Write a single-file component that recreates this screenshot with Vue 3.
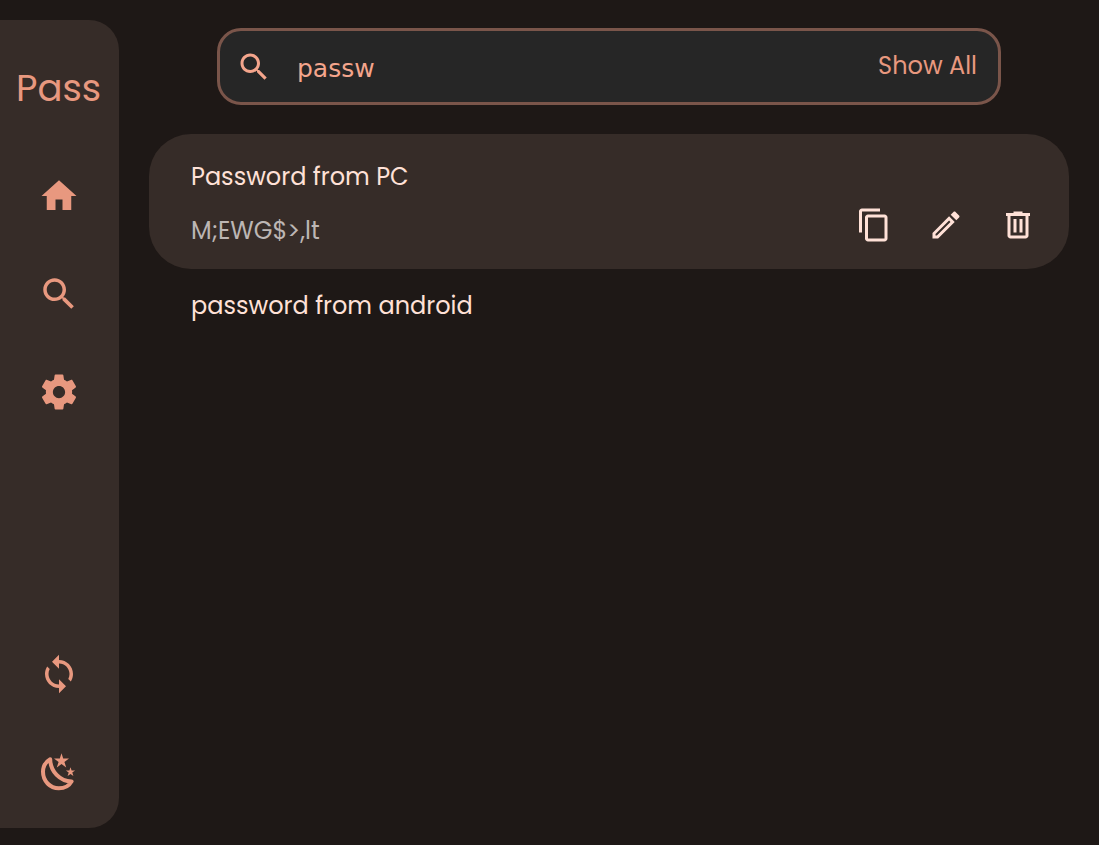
<script setup>
import { ref, computed } from 'vue'

const query = ref('passw')
const showAll = ref(false)
const selected = ref(0)
const entries = [
  { name: 'Password from PC', value: 'M;EWG$>,lt' },
  { name: 'password from android', value: '' },
]
const visible = computed(() =>
  showAll.value ? entries : entries.filter((e) => e.name.toLowerCase().includes(query.value.toLowerCase()))
)

const searchPath =
  'M15.5 14h-.79l-.28-.27C15.41 12.59 16 11.11 16 9.5 16 5.91 13.09 3 9.5 3S3 5.91 3 9.5 5.91 16 9.5 16c1.61 0 3.09-.59 4.23-1.57l.27.28v.79l5 4.99L20.49 19l-4.99-5zm-6 0C7.01 14 5 11.99 5 9.5S7.01 5 9.5 5 14 7.01 14 9.5 11.99 14 9.5 14z'
const mainNav = [
  { label: 'Home', path: 'M10 20v-6h4v6h5v-8h3L12 3 2 12h3v8z' },
  { label: 'Search', path: searchPath },
  {
    label: 'Settings',
    path: 'M19.43 12.98c.04-.32.07-.64.07-.98s-.03-.66-.07-.98l2.11-1.65c.19-.15.24-.42.12-.64l-2-3.46c-.12-.22-.39-.3-.61-.22l-2.49 1c-.52-.4-1.08-.73-1.69-.98l-.38-2.65C14.46 2.18 14.25 2 14 2h-4c-.25 0-.46.18-.49.42l-.38 2.65c-.61.25-1.17.59-1.69.98l-2.49-1c-.23-.09-.49 0-.61.22l-2 3.46c-.13.22-.07.49.12.64l2.11 1.65c-.04.32-.07.65-.07.98s.03.66.07.98l-2.11 1.65c-.19.15-.24.42-.12.64l2 3.46c.12.22.39.3.61.22l2.49-1c.52.4 1.08.73 1.69.98l.38 2.65c.03.24.24.42.49.42h4c.25 0 .46-.18.49-.42l.38-2.65c.61-.25 1.17-.59 1.69-.98l2.49 1c.23.09.49 0 .61-.22l2-3.46c.12-.22.07-.49-.12-.64l-2.11-1.65zM12 15.5c-1.93 0-3.5-1.57-3.5-3.5s1.57-3.5 3.5-3.5 3.5 1.570 3.500 3.500-1.570 3.500-3.500 3.500z',
  },
]
const actions = [
  {
    label: 'Copy',
    path: 'M16 1H4c-1.1 0-2 .9-2 2v14h2V3h12V1zm3 4H8c-1.1 0-2 .9-2 2v14c0 1.1.9 2 2 2h11c1.1 0 2-.9 2-2V7c0-1.1-.9-2-2-2zm0 16H8V7h11v14z',
  },
  {
    label: 'Edit',
    path: 'M14.06 9.02l.92.92L5.92 19H5v-.92l9.06-9.06M17.66 3c-.25 0-.51.1-.7.29l-1.83 1.83 3.75 3.75 1.83-1.83c.39-.39.39-1.02 0-1.41l-2.34-2.34c-.2-.2-.45-.29-.71-.29zm-3.6 3.19L3 17.25V21h3.75L17.81 9.94l-3.75-3.75z',
  },
  {
    label: 'Delete',
    path: 'M7 21q-.825 0-1.412-.587T5 19V6H4V4h5V3h6v1h5v2h-1v13q0 .825-.587 1.413T17 21zM17 6H7v13h10zM9 17h2V8H9zm4 0h2V8h-2z',
  },
]
</script>

<template>
  <div class="app">
    <aside class="sidebar">
      <h1 class="brand">Pass</h1>
      <nav class="nav" aria-label="Main">
        <button v-for="item in mainNav" :key="item.label" class="nav-btn" type="button" :aria-label="item.label">
          <svg class="nav-icon" viewBox="0 0 24 24"><path :d="item.path" /></svg>
        </button>
      </nav>
      <div class="nav">
        <button class="nav-btn" type="button" aria-label="Sync">
          <svg class="nav-icon" viewBox="0 0 24 24">
            <path
              d="M12 4V1L8 5l4 4V6c3.31 0 6 2.69 6 6 0 1.01-.25 1.97-.7 2.8l1.46 1.46C19.54 15.03 20 13.57 20 12c0-4.42-3.58-8-8-8zm0 14c-3.31 0-6-2.69-6-6 0-1.01.25-1.97.7-2.8L5.24 7.74C4.46 8.97 4 10.43 4 12c0 4.42 3.58 8 8 8v3l4-4-4-4v3z"
            />
          </svg>
        </button>
        <button class="nav-btn" type="button" aria-label="Dark theme">
          <svg class="nav-icon" viewBox="0 0 42 42">
            <path
              class="moon"
              d="M12.200 8.200C7.400 11 5 15.400 5 20.800C5 30 12 37.300 20.800 37.300C26.600 37.300 31.200 34.800 33.600 30.400C22 30.400 12.400 20.500 12.200 8.200Z"
            />
            <path d="M23.500 2.200l1.700 5.300h5.800l-4.600 3.400 1.800 5.500-4.700-3.400-4.700 3.400 1.800-5.500-4.600-3.400h5.800z" />
            <path d="M32.500 16.200l1.100 3.300h3.500l-2.800 2.100 1.100 3.400-2.900-2.100-2.900 2.100 1.100-3.400-2.800-2.100h3.500z" />
          </svg>
        </button>
      </div>
    </aside>

    <main class="main">
      <form class="search" role="search" @submit.prevent>
        <svg class="icon" viewBox="0 0 24 24" aria-hidden="true"><path :d="searchPath" /></svg>
        <input v-model="query" class="query" type="text" aria-label="Search passwords" />
        <button class="show-all" type="button" @click="showAll = !showAll">Show All</button>
      </form>

      <ul class="list">
        <li v-for="(entry, i) in visible" :key="entry.name" class="entry" :class="{ open: selected === i }">
          <div class="entry-text">
            <button class="name" type="button" @click="selected = i">{{ entry.name }}</button>
            <span v-if="selected === i && entry.value" class="value">{{ entry.value }}</span>
          </div>
          <div v-if="selected === i" class="actions">
            <button v-for="a in actions" :key="a.label" class="action" type="button" :aria-label="a.label">
              <svg class="icon" viewBox="0 0 24 24"><path :d="a.path" /></svg>
            </button>
          </div>
        </li>
      </ul>
    </main>
  </div>
</template>

<style>
body {
  margin: 0;
  background: #1e1816;
}
</style>

<style scoped>
.app {
  display: flex;
  gap: 30px;
  box-sizing: border-box;
  min-height: 100vh;
  padding: 20px 30px 17px 0;
  background: #1e1816;
  font-family: Poppins, Inter, sans-serif;
  font-size: 24px;
  line-height: 36px;
  color: #ffe1d7;
}
button {
  padding: 0;
  border: 0;
  background: none;
  color: inherit;
  font: inherit;
  cursor: pointer;
}
svg {
  display: block;
  fill: currentColor;
}
.sidebar {
  display: flex;
  flex: none;
  flex-direction: column;
  box-sizing: border-box;
  width: 119px;
  padding: 38px 2px 7px 0;
  border-radius: 0 30px 30px 0;
  background: #362c28;
  color: #e8987f;
}
.brand {
  margin: 0 0 29px;
  font-size: 37px;
  font-weight: 400;
  line-height: 60px;
  text-align: center;
}
.nav {
  display: flex;
  flex-direction: column;
}
.nav:last-child {
  margin-top: auto;
}
.nav-btn {
  display: grid;
  height: 98px;
  place-items: center;
}
.nav-icon {
  width: 42px;
  height: 42px;
}
.moon {
  fill: none;
  stroke: currentColor;
  stroke-width: 4;
  stroke-linejoin: round;
}
.main {
  flex: 1;
  min-width: 0;
}
.search {
  display: flex;
  align-items: center;
  box-sizing: border-box;
  margin: 8px 68px 29px;
  height: 77px;
  padding: 0 21px 0 16px;
  border: 3px solid #7a554a;
  border-radius: 24px;
  background: #262626;
}
.icon {
  flex: none;
  width: 36px;
  height: 36px;
}
.search .icon {
  color: #f4a58c;
}
.query {
  flex: 1;
  min-width: 0;
  margin: 4px 0 0 25px;
  padding: 0;
  border: 0;
  outline: 0;
  background: none;
  color: #f4a58c;
  font-family: "DejaVu Sans", sans-serif;
  font-size: 25px;
}
.show-all {
  padding-bottom: 2px;
  color: #e8987f;
}
.list {
  margin: 0;
  padding: 0;
  list-style: none;
}
.entry {
  display: flex;
  align-items: flex-end;
  justify-content: space-between;
  padding: 19px 33px 19px 42px;
  border-radius: 42px;
}
.entry.open {
  padding: 25px 33px 20px 42px;
  background: #362c28;
}
.entry-text {
  display: flex;
  flex-direction: column;
  align-items: flex-start;
  gap: 18px;
}
.value {
  color: #bcb6b4;
}
.actions {
  display: flex;
  gap: 36px;
  padding-bottom: 6px;
}
</style>
